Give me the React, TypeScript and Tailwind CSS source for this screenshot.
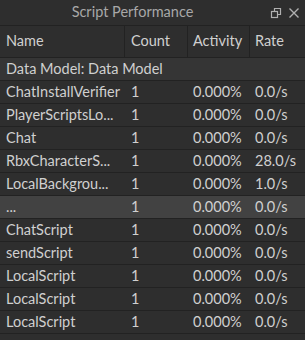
import React from "react";

const rows: [string, string, string, string][] = [
  ["ChatInstallVerifier", "1", "0.000%", "0.0/s"],
  ["PlayerScriptsLo...", "1", "0.000%", "0.0/s"],
  ["Chat", "1", "0.000%", "0.0/s"],
  ["RbxCharacterS...", "1", "0.000%", "28.0/s"],
  ["LocalBackgrou...", "1", "0.000%", "1.0/s"],
  ["...", "1", "0.000%", "0.0/s"],
  ["ChatScript", "1", "0.000%", "0.0/s"],
  ["sendScript", "1", "0.000%", "0.0/s"],
  ["LocalScript", "1", "0.000%", "0.0/s"],
  ["LocalScript", "1", "0.000%", "0.0/s"],
  ["LocalScript", "1", "0.000%", "0.0/s"],
];

export default function App() {
  return (
    <div
      className="w-[305px] h-[340px] overflow-hidden bg-[#2e2e2e] text-[#d0d0d0] text-[14.5px] leading-none"
      style={{ fontFamily: 'Lato, "Noto Sans", sans-serif' }}
    >
      <div className="h-[26px] flex items-center bg-[#2e2e2e] border-b border-[#222] pr-[5px]">
        <span className="flex-1 text-center text-[#a8a8a8] text-[14.5px] pr-[5px]">Script Performance</span>
        <div className="flex items-center gap-[6px]">
          <svg width="12" height="12" viewBox="0 0 12 12" fill="none" stroke="#b0b0b0" strokeWidth="1.2">
            <rect x="1.5" y="4.5" width="6" height="6" />
            <path d="M4.5 4.5V1.5h6v6h-3" />
          </svg>
          <svg width="12" height="12" viewBox="0 0 12 12" fill="none" stroke="#b0b0b0" strokeWidth="1.4">
            <path d="M1.5 1.5l9 9M10.5 1.5l-9 9" />
          </svg>
        </div>
      </div>
      <div className="grid grid-cols-[125px_63px_62px_1fr] h-[32px] bg-[#2e2e2e] border-b border-[#222]">
        <div className="pl-[6px] flex items-center border-r border-[#222]">Name</div>
        <div className="pl-[6px] flex items-center border-r border-[#222]">Count</div>
        <div className="pl-[5px] flex items-center border-r border-[#222]">Activity</div>
        <div className="pl-[5px] flex items-center">Rate</div>
      </div>
      <div className="h-[23px] flex items-center pl-[6px] bg-[#353535] border-b border-[#222]">
        Data Model: Data Model
      </div>
      {rows.map((r, i) => (
        <div
          key={i}
          className={`grid grid-cols-[125px_63px_62px_1fr] h-[23px] border-b border-[#222] ${
            r[0] === "..." ? "bg-[#424242]" : "bg-[#2e2e2e]"
          }`}
        >
          <div className="pl-[6px] flex items-center whitespace-nowrap">{r[0]}</div>
          <div className="pl-[6px] flex items-center">{r[1]}</div>
          <div className="pl-[5px] flex items-center">{r[2]}</div>
          <div className="pl-[5px] flex items-center">{r[3]}</div>
        </div>
      ))}
    </div>
  );
}
